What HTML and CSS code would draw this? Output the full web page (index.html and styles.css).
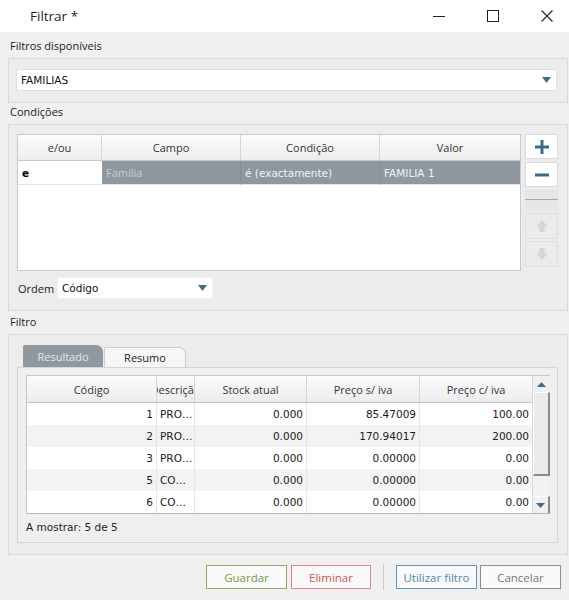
FILE: index.html
```html
<!DOCTYPE html>
<html lang="pt">
<head>
<meta charset="utf-8">
<title>Filtrar</title>
<link rel="stylesheet" href="styles.css">
</head>
<body>
<div class="window">
  <header class="titlebar">
    <span class="title">Filtrar *</span>
    <div class="wincontrols">
      <span class="wc"><svg width="14" height="14" viewBox="0 0 14 14"><path d="M1 7.5h12" stroke="#222" stroke-width="1"/></svg></span>
      <span class="wc"><svg width="14" height="14" viewBox="0 0 14 14"><rect x="1.5" y="1.5" width="11" height="11" fill="none" stroke="#222" stroke-width="1"/></svg></span>
      <span class="wc"><svg width="14" height="14" viewBox="0 0 14 14"><path d="M1.5 1.5l11 11M12.5 1.5l-11 11" stroke="#222" stroke-width="1.1"/></svg></span>
    </div>
  </header>

  <main class="content">
    <div class="sec-label l1">Filtros disponíveis</div>
    <section class="group g1">
      <div class="combo">
        <span class="combo-text">FAMILIAS</span>
        <svg class="caret" width="9" height="6" viewBox="0 0 9 6"><path d="M0 0h9L4.5 6z" fill="#3f6e86"/></svg>
      </div>
    </section>

    <div class="sec-label l2">Condições</div>
    <section class="group g2">
      <div class="cond-row">
        <div class="cond-table">
          <div class="ct-row ct-head">
            <div class="ct-cell">e/ou</div>
            <div class="ct-cell">Campo</div>
            <div class="ct-cell">Condição</div>
            <div class="ct-cell">Valor</div>
          </div>
          <div class="ct-row ct-body">
            <div class="ct-cell c-andor">e</div>
            <div class="ct-cell c-sel c-field">Família</div>
            <div class="ct-cell c-sel">é (exactamente)</div>
            <div class="ct-cell c-sel">FAMILIA 1</div>
          </div>
        </div>
        <div class="side-btns">
          <div class="sbtn"><svg width="16" height="16" viewBox="0 0 16 16"><path d="M8 1v14M1 8h14" stroke="#3a6c86" stroke-width="3"/></svg></div>
          <div class="sbtn"><svg width="16" height="16" viewBox="0 0 16 16"><path d="M1 8h14" stroke="#3a6c86" stroke-width="3"/></svg></div>
          <div class="sep-box"><div class="sep-line"></div></div>
          <div class="sbtn dis"><svg width="14" height="14" viewBox="0 0 14 14"><path d="M7 1L1 7.5h3.5V13h5V7.5H13z" fill="#d4d4d4"/></svg></div>
          <div class="sbtn dis"><svg width="14" height="14" viewBox="0 0 14 14"><path d="M7 13L1 6.5h3.5V1h5v5.5H13z" fill="#d4d4d4"/></svg></div>
        </div>
      </div>
      <div class="ordem-row">
        <span class="ordem-label">Ordem</span>
        <div class="combo combo-ordem">
          <span class="combo-text">Código</span>
          <svg class="caret" width="9" height="6" viewBox="0 0 9 6"><path d="M0 0h9L4.5 6z" fill="#3f6e86"/></svg>
        </div>
      </div>
    </section>

    <div class="sec-label l3">Filtro</div>
    <section class="group g3">
      <div class="tabs">
        <span class="tab active">Resultado</span>
        <span class="tab">Resumo</span>
      </div>
      <div class="tabpane">
        <div class="grid">
          <div class="grid-main">
            <div class="g-row g-head">
              <div class="g-cell">Código</div>
              <div class="g-cell">Descrição</div>
              <div class="g-cell">Stock atual</div>
              <div class="g-cell">Preço s/ iva</div>
              <div class="g-cell">Preço c/ iva</div>
            </div>
            <div class="g-row">
              <div class="g-cell num">1</div><div class="g-cell txt">PRO…</div><div class="g-cell num">0.000</div><div class="g-cell num">85.47009</div><div class="g-cell num">100.00</div>
            </div>
            <div class="g-row alt">
              <div class="g-cell num">2</div><div class="g-cell txt">PRO…</div><div class="g-cell num">0.000</div><div class="g-cell num">170.94017</div><div class="g-cell num">200.00</div>
            </div>
            <div class="g-row">
              <div class="g-cell num">3</div><div class="g-cell txt">PRO…</div><div class="g-cell num">0.000</div><div class="g-cell num">0.00000</div><div class="g-cell num">0.00</div>
            </div>
            <div class="g-row alt">
              <div class="g-cell num">5</div><div class="g-cell txt">CO…</div><div class="g-cell num">0.000</div><div class="g-cell num">0.00000</div><div class="g-cell num">0.00</div>
            </div>
            <div class="g-row">
              <div class="g-cell num">6</div><div class="g-cell txt">CO…</div><div class="g-cell num">0.000</div><div class="g-cell num">0.00000</div><div class="g-cell num">0.00</div>
            </div>
          </div>
          <div class="vscroll">
            <div class="vs-btn"><svg width="9" height="5" viewBox="0 0 9 5"><path d="M0 5h9L4.5 0z" fill="#3f6e86"/></svg></div>
            <div class="vs-thumb"></div>
            <div class="vs-track"></div>
            <div class="vs-btn vs-down"><svg width="9" height="5" viewBox="0 0 9 5"><path d="M0 0h9L4.5 5z" fill="#3f6e86"/></svg></div>
          </div>
        </div>
        <div class="count">A mostrar: 5 de 5</div>
      </div>
    </section>

    <footer class="actions">
      <div class="btn btn-save">Guardar</div>
      <div class="btn btn-del">Eliminar</div>
      <div class="vsep"></div>
      <div class="btn btn-use">Utilizar filtro</div>
      <div class="btn btn-cancel">Cancelar</div>
    </footer>
  </main>
</div>
</body>
</html>
```

FILE: styles.css
```css
* { box-sizing: border-box; }

html, body {
  margin: 0;
  padding: 0;
  background: #f0f0f0;
}

.window {
  width: 569px;
  height: 600px;
  background: #f0f0f0;
  font-family: "Open Sans", "Noto Sans", sans-serif;
  font-size: 11px;
  color: #222;
  overflow: hidden;
}

/* title bar */
.titlebar {
  height: 32px;
  background: #ffffff;
  display: flex;
  align-items: center;
  padding-left: 30px;
}
.title {
  font-size: 13.5px;
  color: #1e1e1e;
  flex: 1;
  line-height: 18px;
  padding-bottom: 1px;
}
.wincontrols {
  display: flex;
  align-items: center;
  gap: 40px;
  margin-right: 15px;
}
.wc {
  width: 14px;
  height: 14px;
  display: flex;
}

/* content */
.content {
  padding: 0 1px 0 8px;
}

.sec-label {
  padding-left: 2px;
  line-height: 16px;
  font-size: 11px;
  color: #222;
}
.l1 { height: 26px; padding-top: 6px; }
.l2 { height: 21px; padding-top: 1px; }
.l3 { height: 23px; padding-top: 3px; }

.group {
  border: 1px solid #d9d9d9;
  background: #ececec;
}
.g1 { padding: 10px 10px 11px 7px; }
.g2 { padding: 9px 9px 11px 8px; }
.g3 { padding: 10px 9px 11px 8px; }

/* combos */
.combo {
  height: 22px;
  background: #ffffff;
  border: 1px solid #e1e1e1;
  display: flex;
  align-items: center;
  padding: 0 5px 0 4px;
  font-family: "DejaVu Sans", sans-serif;
  font-size: 10.5px;
  color: #111;
}
.combo-text { flex: 1; }
.caret { display: block; margin-right: 0; }

/* conditions */
.cond-row {
  display: flex;
  height: 137px;
}
.cond-table {
  width: 504px;
  height: 137px;
  background: #ffffff;
  border: 1px solid #c9c9c9;
}
.ct-row {
  display: grid;
  grid-template-columns: 84px 139px 139px 1fr;
}
.ct-head {
  height: 26px;
  border-bottom: 1px solid #c8c8c8;
  background: linear-gradient(#fbfbfb, #ededed);
}
.ct-head .ct-cell {
  display: flex;
  align-items: center;
  justify-content: center;
  border-right: 1px solid #d6d6d6;
  color: #333;
}
.ct-head .ct-cell:last-child { border-right: none; }
.ct-body { height: 24px; }
.ct-body .ct-cell {
  display: flex;
  align-items: center;
  padding-left: 4px;
  font-family: "DejaVu Sans", sans-serif;
  font-size: 10.5px;
  border-bottom: 1px solid #e3e3e3;
}
.c-andor { color: #000; font-weight: bold; }
.c-sel {
  background: #8f989f;
  color: #f0f3f5;
  border-right: 1px solid #858e95;
}
.c-sel:last-child { border-right: none; }
.ct-body .c-field {
  font-family: "Open Sans", sans-serif;
  font-size: 11px;
  color: #c9ced2;
}

.side-btns {
  width: 33px;
  margin-left: 4px;
  display: flex;
  flex-direction: column;
}
.sbtn {
  height: 25px;
  background: #ffffff;
  border: 1px solid #dadada;
  display: flex;
  align-items: center;
  justify-content: center;
  margin-bottom: 3px;
}
.sbtn.dis {
  background: #ebebeb;
  border-color: #dedede;
  height: 26px;
  margin-bottom: 2px;
}
.sep-box {
  height: 20px;
  background: #e6e6e6;
  margin-bottom: 3px;
  padding-top: 9px;
}
.sep-line {
  height: 1px;
  background: #a8a8a8;
}

.ordem-row {
  display: flex;
  align-items: center;
  margin-top: 6px;
  height: 22px;
  padding-left: 1px;
}
.ordem-label {
  width: 39px;
  color: #222;
}
.combo-ordem {
  width: 156px;
  border-color: #f2f2f2;
}

/* tabs */
.tabs {
  height: 22px;
  display: flex;
  align-items: flex-end;
  padding-left: 6px;
}
.tab {
  height: 20px;
  display: flex;
  align-items: center;
  justify-content: center;
  border-radius: 2px 7px 0 0;
}
.tab.active {
  width: 80px;
  height: 22px;
  background: #8f989f;
  color: #e3e7ea;
}
.tab:not(.active) {
  width: 82px;
  margin-left: 1px;
  background: #f6f6f6;
  border: 1px solid #cdcdcd;
  border-bottom: none;
  color: #222;
}
.tabpane {
  height: 176px;
  border: 1px solid #d6d6d6;
  background: #efefef;
  padding: 7px 7px 7px 8px;
}

/* grid */
.grid {
  display: flex;
  height: 139px;
  border-top: 1px solid #c6c6c6;
  border-left: 1px solid #c6c6c6;
  border-bottom: 1px solid #b5b5b5;
}
.grid-main {
  width: 505px;
  background: #ffffff;
}
.g-row {
  display: grid;
  grid-template-columns: 130px 38px 112px 113px 112px;
  height: 22px;
  background: #ffffff;
}
.g-row.alt { background: #f3f3f3; }
.g-head {
  height: 27px;
  border-bottom: 1px solid #c4c4c4;
  background: linear-gradient(#fbfbfb, #ececec);
}
.g-head .g-cell {
  display: flex;
  align-items: center;
  justify-content: center;
  white-space: nowrap;
  overflow: hidden;
  border-right: 1px solid #d6d6d6;
  color: #333;
  font-size: 11px;
}
.g-head .g-cell:last-child { border-right: none; }
.g-cell {
  border-right: 1px solid #e6e6e6;
  display: flex;
  align-items: center;
  font-family: "DejaVu Sans", sans-serif;
  font-size: 10.5px;
  color: #1a1a1a;
  overflow: hidden;
  white-space: nowrap;
}
.g-head .g-cell { font-family: "Open Sans", sans-serif; }
.g-cell:last-child { border-right: none; }
.g-cell.num { justify-content: flex-end; padding-right: 3px; }
.g-cell.txt { padding-left: 3px; }

.vscroll {
  width: 18px;
  display: flex;
  flex-direction: column;
  background: #efefef;
  border-left: 1px solid #d8d8d8;
}
.vs-btn {
  height: 16px;
  display: flex;
  align-items: center;
  justify-content: center;
  background: #efefef;
}
.vs-thumb {
  height: 84px;
  background: #ebebeb;
  border-top: 1px solid #ffffff;
  border-left: 1px solid #ffffff;
  border-right: 2px solid #8a8a8a;
  border-bottom: 2px solid #8a8a8a;
}
.vs-track {
  flex: 1;
  background: #f2f2f2;
}
.vs-down {
  height: 17px;
  border-right: 2px solid #8a8a8a;
  border-top: 1px solid #ffffff;
}

.count {
  margin-top: 5px;
  line-height: 16px;
  font-family: "DejaVu Sans", sans-serif;
  font-size: 10.5px;
  color: #222;
}

/* action buttons */
.actions {
  display: flex;
  align-items: center;
  justify-content: flex-end;
  margin-top: 10px;
  padding-right: 7px;
  height: 24px;
}
.btn {
  height: 24px;
  width: 81px;
  display: flex;
  align-items: center;
  justify-content: center;
  background: #fafafa;
  border: 1px solid #999;
  font-size: 11.5px;
}
.btn-save { border-color: #8eab5e; color: #6e9a3f; margin-right: 4px; }
.btn-del { border-color: #e68585; color: #d9534f; width: 80px; }
.btn-use { border-color: #5f97b4; color: #4e88a6; margin-right: 3px; }
.btn-cancel { border-color: #8e8e8e; color: #777; }
.vsep {
  width: 1px;
  height: 26px;
  background: #c8c8c8;
  margin: 0 12px 0 12px;
}
```
